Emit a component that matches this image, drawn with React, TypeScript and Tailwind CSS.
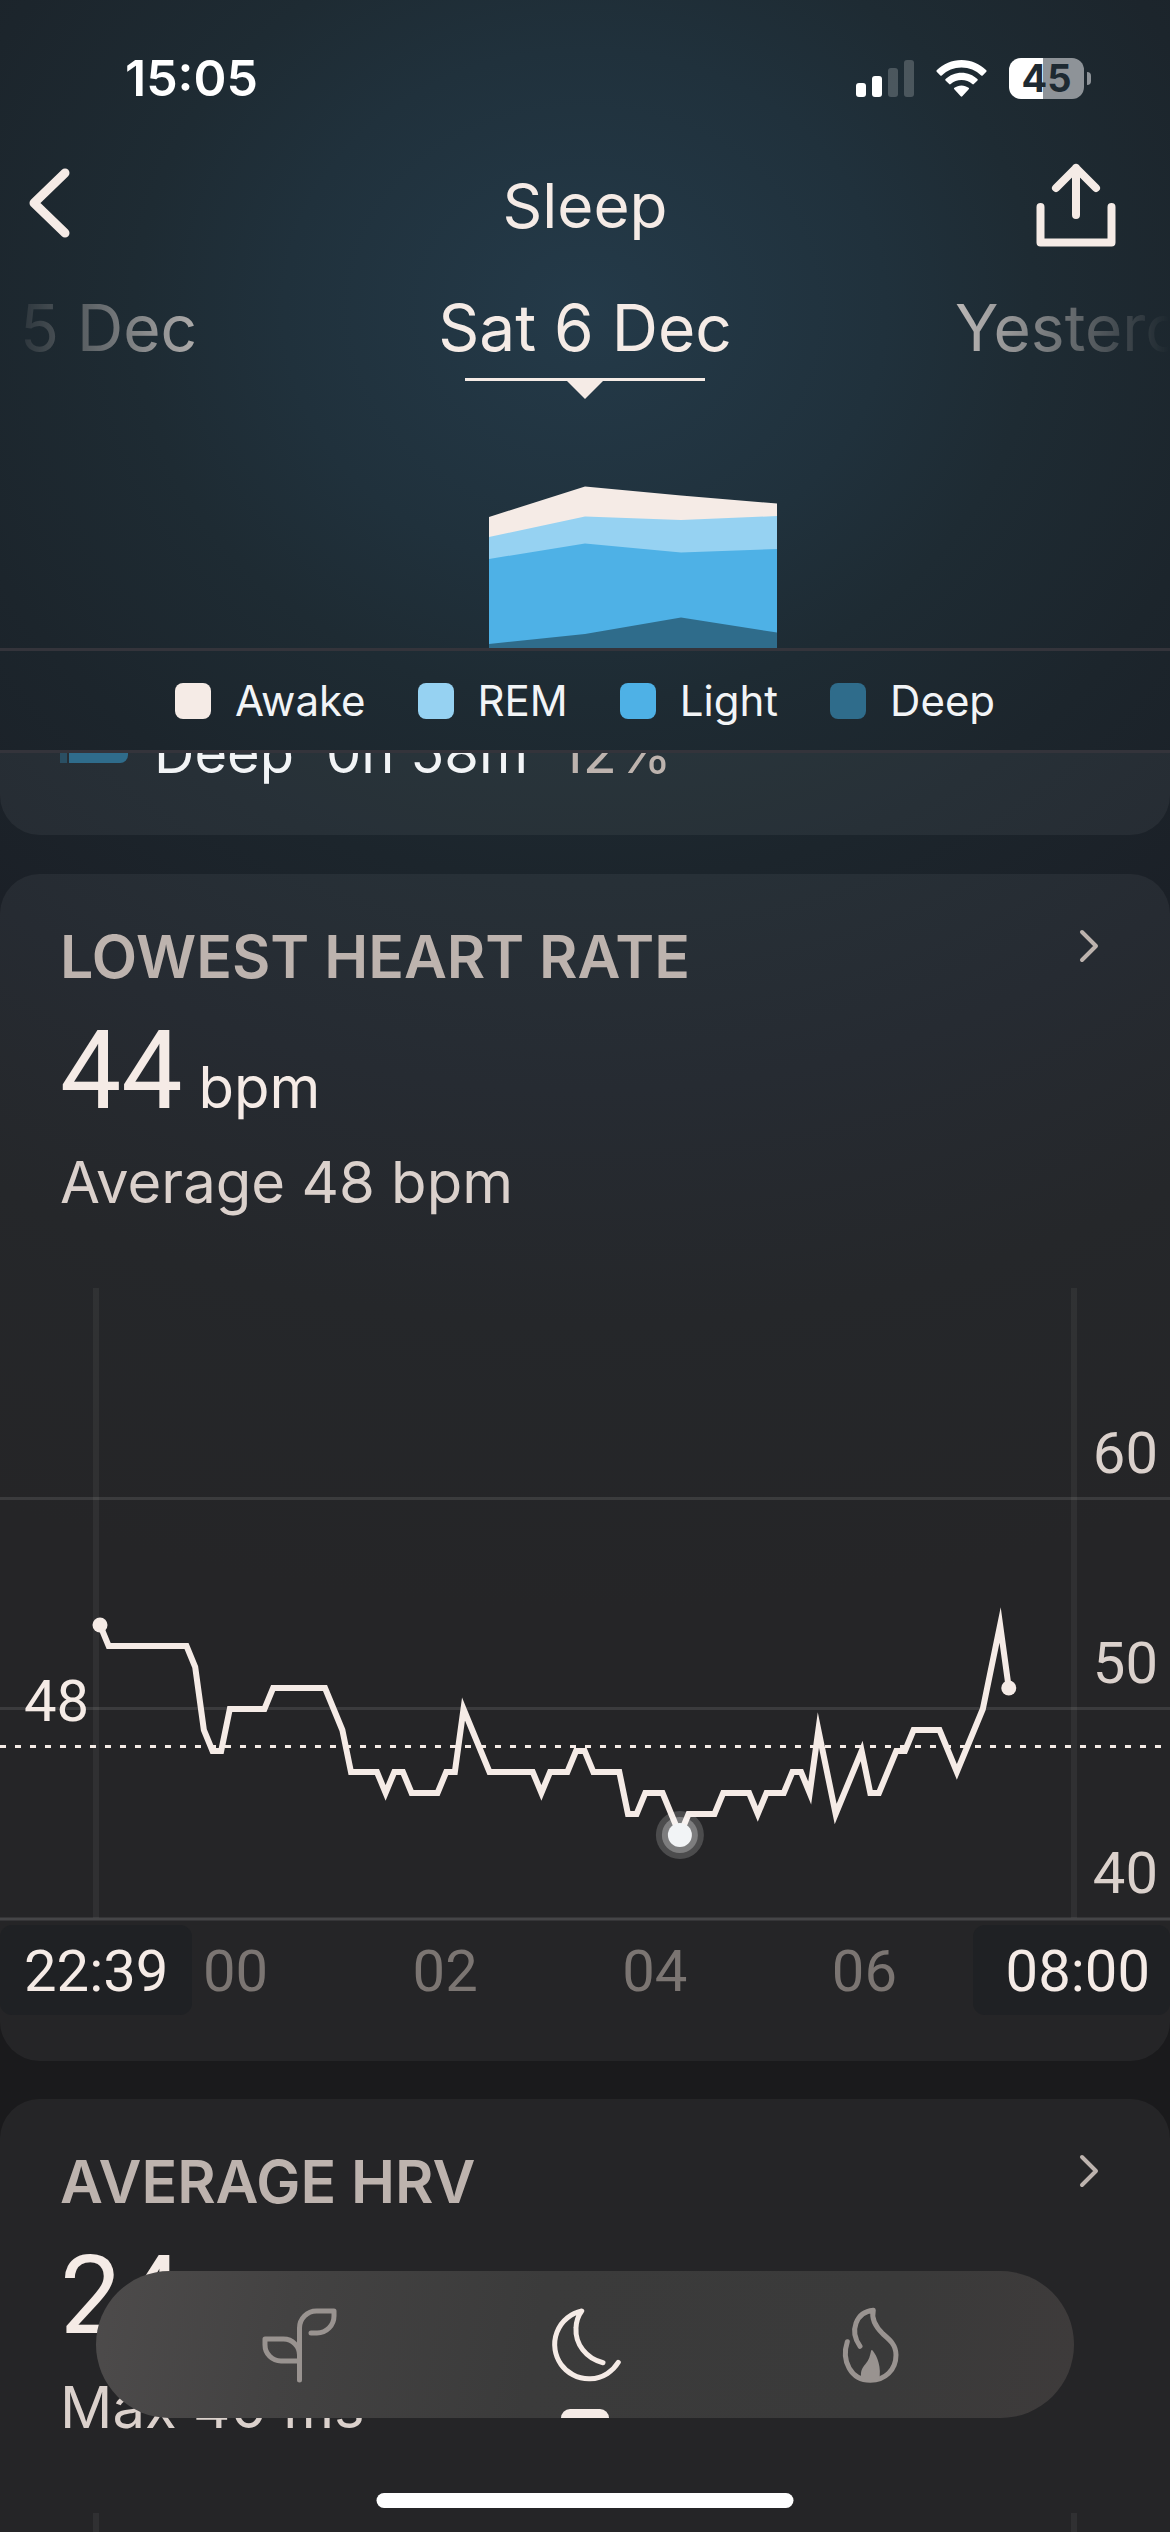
import React from "react";

const TEXT = "font-['Inter',sans-serif]";
const DIGITS = "font-['Roboto',sans-serif]";

/* [sample index (5 minute steps), beats per minute] */
const HEART_RATE: [number, number][] = [
  [0, 54], [1, 53], [10, 53], [11, 52], [12, 49], [13, 48], [14, 48], [15, 50], [19, 50],
  [20, 51], [26, 51], [28, 49], [29, 47], [32, 47], [33, 46], [34, 47], [35, 47], [36, 46],
  [39, 46], [40, 47], [41, 47], [42, 50], [45, 47], [50, 47], [51, 46], [52, 47], [54, 47],
  [55, 48], [56, 48], [57, 47], [60, 47], [61, 45], [62, 45], [63, 46], [65, 46], [67, 44],
  [68, 45], [71, 45], [72, 46], [75, 46], [76, 45], [77, 46], [79, 46], [80, 47], [81, 47],
  [82, 46], [83, 49], [85, 45], [88, 48], [89, 46], [90, 46], [92, 48], [93, 48], [94, 49],
  [97, 49], [99, 47], [102, 50], [104, 54], [105, 51],
];

const px = (i: number) => 100 + i * 8.655;
const py = (bpm: number) => 631 - (bpm - 40) * 21;

const LEGEND = [
  { label: "Awake", swatch: "bg-[#f5ebe6]" },
  { label: "REM", swatch: "bg-[#96d2f2]" },
  { label: "Light", swatch: "bg-[#4eb1e6]" },
  { label: "Deep", swatch: "bg-[#2f6c8b]" },
];

function StatusBar() {
  return (
    <div className="flex h-[156px] items-center justify-between pr-[79px] pl-[125px] text-white">
      <span className="text-[50px] font-semibold">15:05</span>
      <div className="flex items-center gap-[22px]">
        <svg width="58" height="37" viewBox="0 0 58 37" fill="#fff" aria-label="Signal">
          <rect x="0" y="23" width="10" height="14" rx="3" />
          <rect x="16" y="16" width="10" height="21" rx="3" />
          <rect x="32" y="8" width="10" height="29" rx="3" opacity=".2" />
          <rect x="48" y="0" width="10" height="37" rx="3" opacity=".2" />
        </svg>
        <svg width="51" height="37" viewBox="0 0 51 37" fill="#fff" aria-label="Wi-Fi">
          <path d="M25.500 7.500C33 7.500 40 10.500 45.200 15.400Q46 16.100 46.700 15.400L50.300 11.800Q51 11 50.300 10.300C43.800 4 35 0 25.500 0S7.200 4 .7 10.300Q0 11 .7 11.800L4.300 15.400Q5 16.100 5.800 15.400C11 10.500 18 7.500 25.500 7.500Z" />
          <path d="M25.500 20C29.600 20 33.400 21.500 36.300 24.100Q37.100 24.800 37.800 24.100L41.500 20.400Q42.200 19.700 41.400 19C37.200 15.100 31.600 12.700 25.500 12.700S13.800 15.100 9.600 19Q8.800 19.700 9.500 20.400L13.200 24.100Q13.900 24.800 14.700 24.100C17.600 21.500 21.400 20 25.500 20Z" />
          <path d="M32.700 29.200Q33.500 28.500 32.600 27.800C30.700 26.300 28.200 25.400 25.500 25.400S20.300 26.300 18.400 27.800Q17.500 28.500 18.300 29.200L24.700 36.300Q25.500 37.100 26.300 36.300Z" />
        </svg>
        <div className="flex items-center gap-[3px]">
          <div className="flex h-[41px] w-[75px] items-center justify-center rounded-[12px] bg-linear-to-r from-white from-45% to-[#8e9398] to-45% text-[38px] leading-none font-bold text-[#1e2a32]">
            45
          </div>
          <div className="h-[13px] w-[4px] rounded-r-full bg-[#8e9398]" />
        </div>
      </div>
    </div>
  );
}

function NavBar() {
  return (
    <div className="grid h-[100px] grid-cols-3 items-center px-6">
      <button aria-label="Back" className="justify-self-start">
        <svg width="52" height="76" viewBox="0 0 52 76" fill="none" stroke="#f5ebe6" strokeWidth="9" strokeLinecap="round" strokeLinejoin="round">
          <path d="M41 5L10 35L41 65" />
        </svg>
      </button>
      <h1 className="justify-self-center text-[62px] leading-[72px]">Sleep</h1>
      <button aria-label="Share" className="justify-self-end pr-[27px]">
        <svg width="88" height="88" viewBox="0 0 88 88" fill="none" stroke="#f5ebe6" strokeWidth="8" strokeLinecap="round" strokeLinejoin="round">
          <path d="M9.500 45V80.500H80.500V45M45 6V53M25 26L45 6L65 26" />
        </svg>
      </button>
    </div>
  );
}

function DayPicker() {
  return (
    <div>
      <div className="mt-[22px] flex h-[100px] items-center text-[64px] leading-[76px] whitespace-nowrap mask-[linear-gradient(to_right,transparent,#000_220px,#000_calc(100%-220px),transparent)]">
        <button className="flex w-[215px] justify-end overflow-hidden pr-[18px] text-[#f5ebe6]/75">Fri 5 Dec</button>
        <button className="flex-1 text-center text-[#f5ebe6]">Sat 6 Dec</button>
        <button className="w-[215px] overflow-hidden text-left text-[#f5ebe6]/75">Yesterday</button>
      </div>
      <svg className="mx-auto block" width="240" height="21" viewBox="0 0 240 21" fill="#f5ebe6">
        <path d="M0 0H240V3H138L120 21L102 3H0Z" />
      </svg>
    </div>
  );
}

function StagesTrend() {
  return (
    <svg className="mt-[87px] block h-[162px] w-full" viewBox="0 0 1170 162" preserveAspectRatio="none" role="img" aria-label="Sleep stages by day">
      <path fill="#f5ebe6" d="M489 31L585 0.500L681 9.500L777 17.500V162H489Z" />
      <path fill="#96d2f2" d="M489 51L585 30.500L681 34L777 30V162H489Z" />
      <path fill="#4eb1e6" d="M489 73L585 57.500L681 66.500L777 63V162H489Z" />
      <path fill="#2f6c8b" d="M489 158L585 148L681 131.500L777 146.500V162H489Z" />
    </svg>
  );
}

function Legend() {
  return (
    <ul className="flex h-[105px] items-center justify-center gap-[52px] border-y-[3px] border-[#34343b] text-[42px] leading-[48px] text-[#f2f4f6]">
      {LEGEND.map((item) => (
        <li key={item.label} className="flex items-center gap-6">
          <span className={`size-9 rounded-[8px] ${item.swatch}`} />
          {item.label}
        </li>
      ))}
    </ul>
  );
}

function MetricHeader({ title, value, unit, detail }: { title: string; value: string; unit: string; detail: string }) {
  return (
    <div className="px-[60px] pt-[47px]">
      <div className="flex items-start justify-between">
        <h2 className="text-[59px] leading-[72px] font-semibold text-[#bdb3ae]">{title}</h2>
        <button aria-label={`Open ${title}`} className="mt-[6px] pr-[10px]">
          <svg width="22" height="38" viewBox="0 0 22 38" fill="none" stroke="#bdb3ae" strokeWidth="4" strokeLinecap="round" strokeLinejoin="round">
            <path d="M4 5L18 19L4 33" />
          </svg>
        </button>
      </div>
      <p className="mt-[18px] flex items-baseline gap-4 text-[#f5ebe6]">
        <span className={`text-[109px] leading-[120px] ${DIGITS}`}>{value}</span>
        <span className="text-[58px] leading-[72px]">{unit}</span>
      </p>
      <p className="mt-[15px] text-[58px] leading-[72px] text-[#dbd1cc]">{detail}</p>
    </div>
  );
}

function HeartRateChart() {
  const points = HEART_RATE.map(([i, bpm]) => `${px(i)},${py(bpm)}`).join(" ");
  return (
    <div className={`relative mt-[70px] h-[633px] text-[58px] leading-[56px] text-[#dbd1cc] ${DIGITS}`}>
      <svg className="block h-full w-full" viewBox="0 0 1170 633" preserveAspectRatio="none" role="img" aria-label="Heart rate overnight">
        <path d="M96 0V630M1074 0V630" stroke="#fff" strokeOpacity=".05" strokeWidth="6" />
        <path d="M0 210.500H1170M0 420.500H1170" stroke="#fff" strokeOpacity=".1" strokeWidth="3" />
        <path d="M0 631H1170" stroke="#fff" strokeOpacity=".15" strokeWidth="3" />
        <path d="M0 458.500H1170" stroke="#f5ebe6" strokeWidth="3" strokeDasharray="6 9" />
        <polyline points={points} fill="none" stroke="#f5ebe6" strokeWidth="6" strokeMiterlimit="20" />
        <circle cx={px(0)} cy={py(54)} r="7.500" fill="#f5ebe6" />
        <circle cx={px(105)} cy={py(51)} r="7.500" fill="#f5ebe6" />
        <circle cx={px(67)} cy={py(44)} r="24" fill="#fff" fillOpacity=".18" />
        <circle cx={px(67)} cy={py(44)} r="18" fill="#fff" fillOpacity=".28" />
        <circle cx={px(67)} cy={py(44)} r="12" fill="#f2f4f6" />
      </svg>
      <span className="absolute top-[137px] right-3">60</span>
      <span className="absolute top-[347px] right-3">50</span>
      <span className="absolute top-[557px] right-3">40</span>
      <span className="absolute top-[385px] left-6 text-[#f5ebe6]">48</span>
    </div>
  );
}

function TimeAxis() {
  return (
    <div className={`mt-1 flex h-[90px] items-stretch text-[58px] leading-[92px] text-[#7b7572] ${DIGITS}`}>
      <span className="w-[192px] rounded-[12px] bg-[#1f2124] pl-6 text-[#f5ebe6]">22:39</span>
      <div className="flex flex-1 justify-between pr-[76px] pl-[11px]">
        <span>00</span>
        <span>02</span>
        <span>04</span>
        <span>06</span>
      </div>
      <span className="w-[197px] rounded-[12px] bg-[#1f2124] pr-5 text-right text-[#f5ebe6]">08:00</span>
    </div>
  );
}

function TabBar() {
  return (
    <nav className="absolute inset-x-24 bottom-[114px] flex h-[147px] justify-center overflow-hidden rounded-[74px] bg-[linear-gradient(100deg,#4d4b4b,#434242_20%,#3b3b3b_45%,#3a3a3a_80%,#3e3b3b)]">
      <button aria-label="Readiness" className="flex w-[285px] items-center justify-center">
        <svg width="96" height="96" viewBox="0 0 96 96" fill="none" stroke="#999390" strokeWidth="5" strokeLinecap="round" strokeLinejoin="round">
          <path d="M47.500 83V31A17 17 0 0 1 64.500 14H82V19A17 17 0 0 1 65 36H59M47.500 64H29A16 16 0 0 1 13 48V42H31.500A16 16 0 0 1 47.500 58" />
        </svg>
      </button>
      <button aria-label="Sleep" aria-current="page" className="relative flex w-[285px] items-center justify-center">
        <svg width="96" height="96" viewBox="0 0 96 96" fill="none" stroke="#f5ebe6" strokeWidth="5" strokeLinecap="round" strokeLinejoin="round">
          <path d="M66 65.700C49 61.500 38 47 39 31C39.200 25 41 19 44.700 14A34.300 34.300 0 1 0 81.300 65.300" />
        </svg>
        <span className="absolute bottom-0 h-[9px] w-12 rounded-t-[9px] bg-[#f5ebe6]" />
      </button>
      <button aria-label="Activity" className="flex w-[285px] items-center justify-center">
        <svg width="96" height="96" viewBox="0 0 96 96" fill="none" stroke="#999390" strokeWidth="5" strokeLinecap="round" strokeLinejoin="round">
          <path d="M38 49.300C27 34 34 15 51.300 13.300C49 22 53 29 61 37C68 43 74 48 74 58C74 73 63 83.300 48.300 83.300C29 83.300 19 64 25.300 44.700" />
          <path fill="#999390" stroke="none" d="M49 54Q49.700 52 51 54C55 59 60 70 57 84H40.500C37 76 40 71 43.500 67C47 63 48 59 49 54Z" />
        </svg>
      </button>
    </nav>
  );
}

export default function App() {
  return (
    <div className={`relative flex h-screen flex-col overflow-hidden bg-[#1a1a1c] bg-[radial-gradient(ellipse_1500px_1300px_at_50%_310px,#243a49_0,#20313c_20%,#1e2b33_30%,#1c252c_44%,#1b2027_60%,#1a1c1f_78%,#1a1a1c_100%)] text-[#f5ebe6] ${TEXT}`}>
      <header>
        <StatusBar />
        <NavBar />
        <DayPicker />
        <StagesTrend />
        <Legend />
      </header>
      <main className="min-h-0 flex-1 overflow-hidden">
        <section className="flex h-[82px] items-start overflow-hidden rounded-b-[40px] bg-white/5 pl-[60px] text-[56px] leading-[72px] text-[#f2f4f6]">
          <span className="mr-[2px] h-[10px] w-[7px] bg-[#2a4f63]" />
          <span className="mr-[26px] h-[10px] w-[59px] rounded-br-[8px] bg-[#2f6c8b]" />
          <span className="-mt-9">Deep</span>
          <span className="-mt-9 ml-[32px]">0h 58m</span>
          <span className="-mt-9 ml-[32px] text-[#bdb3ae]">12%</span>
        </section>
        <section className="mt-[39px] rounded-[40px] bg-white/5 pb-[46px]">
          <MetricHeader title="LOWEST HEART RATE" value="44" unit="bpm" detail="Average 48 bpm" />
          <HeartRateChart />
          <TimeAxis />
        </section>
        <section className="mt-[38px] rounded-t-[40px] bg-white/5">
          <MetricHeader title="AVERAGE HRV" value="24" unit="ms" detail="Max 40 ms" />
          <div className="mx-[93px] mt-[70px] h-[633px] border-x-[6px] border-white/5" />
        </section>
      </main>
      <TabBar />
      <div className="absolute bottom-6 left-1/2 h-[15px] w-[417px] -translate-x-1/2 rounded-full bg-white" />
    </div>
  );
}
